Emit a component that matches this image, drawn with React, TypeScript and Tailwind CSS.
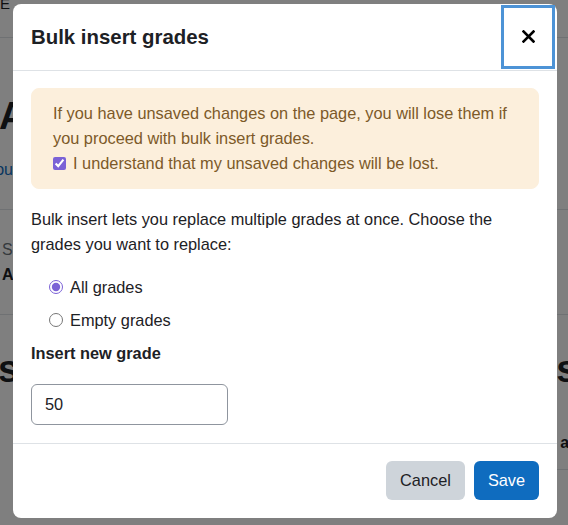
import React from "react";

function CloseIcon() {
  return (
    <svg width="13" height="13" viewBox="0 0 13 13" fill="none">
      <path d="M1.5 1.5 L11.5 11.5 M11.5 1.5 L1.5 11.5" stroke="#000" strokeWidth="2.6" strokeLinecap="square" />
    </svg>
  );
}

function Background() {
  return (
    <div className="w-[568px] h-[525px] bg-white text-[#1d2125] overflow-hidden flex flex-col" style={{ fontFamily: '"Liberation Sans", Arial, sans-serif' }}>
      <div className="h-[38px] shrink-0 border-b border-[#dee2e6] flex items-start">
        <span className="mt-[-7px] text-[15px] leading-[22px] tracking-[4px]">E⌄</span>
      </div>
      <div className="h-[172px] shrink-0 border-b border-[#dee2e6] flex flex-col">
        <div className="mt-[56px] text-[38px] leading-[44px] font-bold ml-[-1px]">Ac</div>
        <div className="mt-[20px] text-[16px] leading-[24px] text-[#0f6cbf] ml-[-14px]">You</div>
      </div>
      <div className="h-[105px] shrink-0 border-b border-[#dee2e6] flex flex-col">
        <div className="mt-[28px] text-[16px] leading-[24px] text-[#6a737b] ml-[2px]">Se</div>
        <div className="mt-[1px] text-[16px] leading-[24px] font-bold ml-[2px]">A</div>
      </div>
      <div className="flex-1 flex justify-between">
        <div className="mt-[32px] text-[38px] leading-[44px] font-bold ml-[-2px]">s</div>
        <div className="flex flex-col items-end w-[12px] overflow-visible">
          <div className="mt-[32px] text-[38px] leading-[44px] font-bold whitespace-nowrap mr-[-22px]">
            s<span className="text-[#c65d00]">t</span>
          </div>
          <div className="mt-[40px] text-[16px] leading-[24px] font-bold whitespace-nowrap mr-[-10px]">ac</div>
          <div className="mt-[14px] w-[12px] border-b border-[#dee2e6]" />
        </div>
      </div>
    </div>
  );
}

export default function App() {
  return (
    <div className="relative w-[568px] h-[525px] overflow-hidden">
      <Background />
      <div className="absolute inset-0 bg-black/50">
        <div
          className="ml-[13px] mt-[4px] w-[544px] bg-white rounded-[8px] text-[#1d2125] flex flex-col"
          style={{ fontFamily: '"Liberation Sans", Arial, sans-serif' }}
        >
          {/* header */}
          <div className="h-[67px] flex items-center justify-between border-b border-[#dee2e6] pl-[18px] pr-[2px]">
            <h5 className="text-[20.4px] leading-[24px] font-bold">Bulk insert grades</h5>
            <button className="w-[54px] h-[64px] border-[3px] border-[#4d93d6] flex items-center justify-center mt-[-1px]">
              <CloseIcon />
            </button>
          </div>
          {/* body */}
          <div className="px-[18px] pt-[17px] pb-[18px] text-[16.33px] leading-[25px]">
            <div className="bg-[#fcefdc] border border-[#fcefdc] rounded-[8px] px-[21px] py-[12px] text-[#7d5a29]">
              <p>If you have unsaved changes on the page, you will lose them if you proceed with bulk insert grades.</p>
              <label className="flex items-center gap-[7px]">
                <input type="checkbox" defaultChecked className="w-[13px] h-[13px] m-0 accent-[#7b62d6]" />
                <span>I understand that my unsaved changes will be lost.</span>
              </label>
            </div>
            <p className="mt-[17.5px]">
              Bulk insert lets you replace multiple grades at once. Choose the grades you want to replace:
            </p>
            <div className="mt-[18px] pl-[18px] flex flex-col gap-[8px]">
              <label className="flex items-center gap-[7px]">
                <input type="radio" name="g" defaultChecked className="w-[14px] h-[14px] m-0 accent-[#7b62d6]" />
                <span>All grades</span>
              </label>
              <label className="flex items-center gap-[7px]">
                <input type="radio" name="g" className="w-[14px] h-[14px] m-0 accent-[#7b62d6]" />
                <span>Empty grades</span>
              </label>
            </div>
            <div className="mt-[8.5px] font-bold">Insert new grade</div>
            <div className="mt-[17.5px] w-[197px] h-[41px] border border-[#8f959e] rounded-[6px] flex items-center px-[13px] text-[#1d2125]">
              50
            </div>
          </div>
          {/* footer */}
          <div className="border-t border-[#dee2e6] flex justify-end gap-[9px] px-[18px] pt-[17px] pb-[18px] text-[16.33px]">
            <button className="h-[39px] w-[79px] rounded-[6px] bg-[#ced4da] text-[#1d2125]">Cancel</button>
            <button className="h-[39px] w-[65px] rounded-[6px] bg-[#0f6cbf] text-white">Save</button>
          </div>
        </div>
      </div>
    </div>
  );
}
